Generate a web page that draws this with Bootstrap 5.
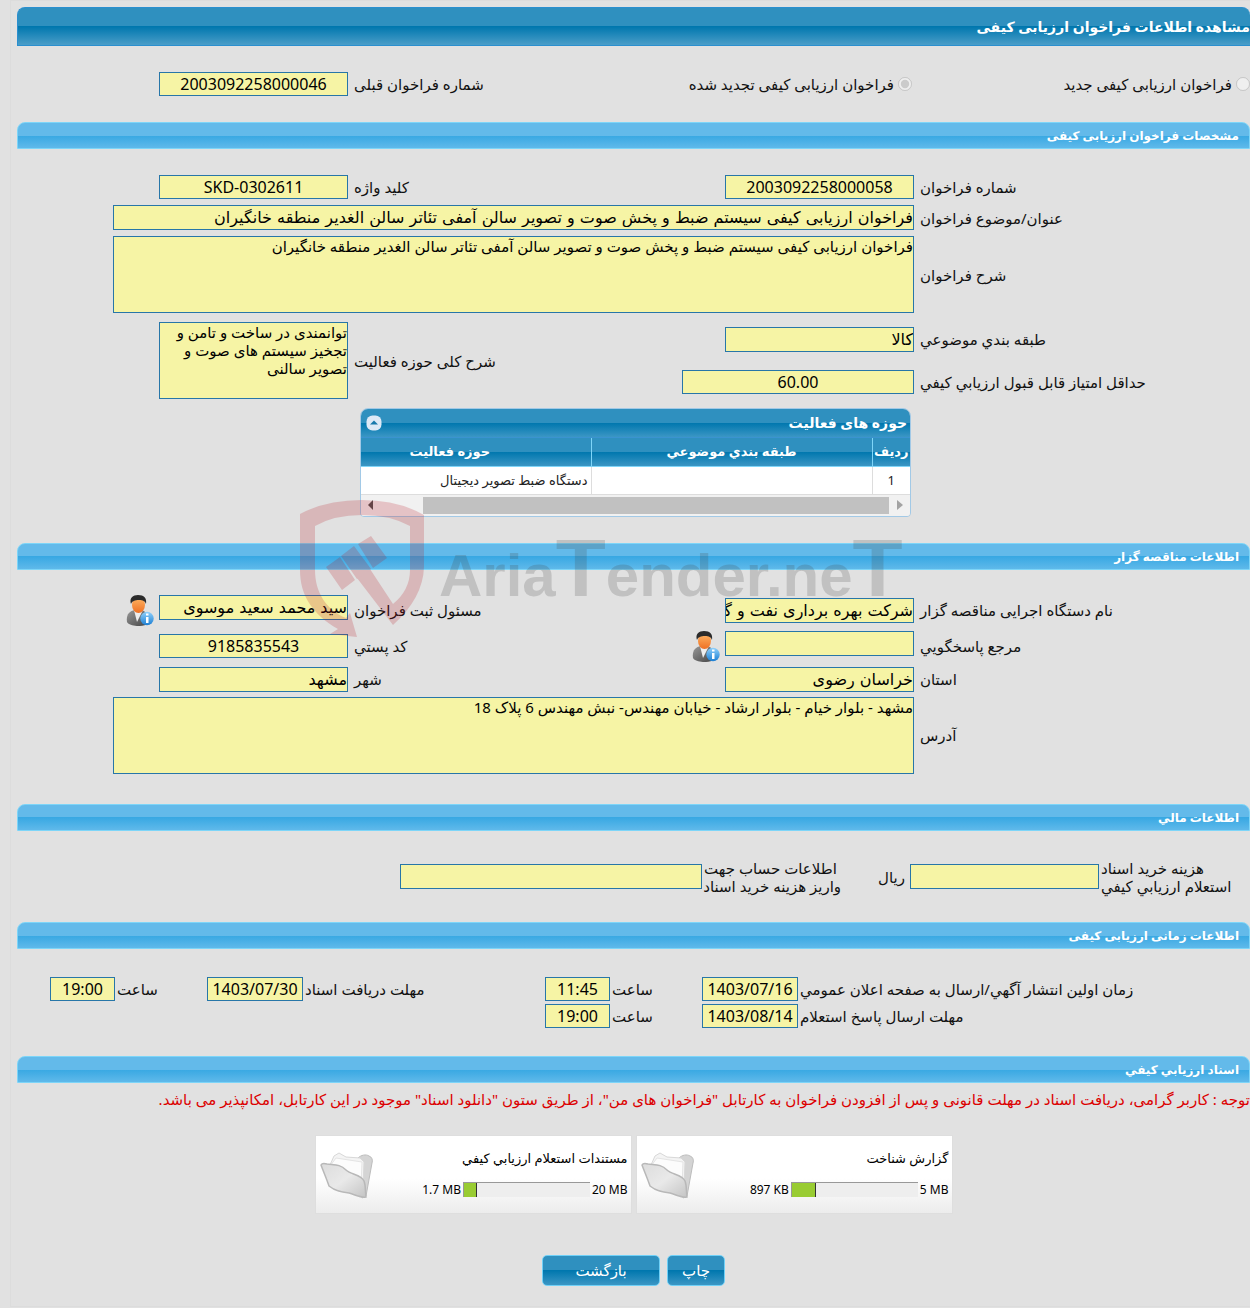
<!DOCTYPE html>
<html lang="fa" dir="rtl">
<head>
<meta charset="utf-8">
<meta name="viewport" content="width=device-width, initial-scale=1">
<title>مشاهده اطلاعات فراخوان ارزیابی کیفی</title>
<link href="https://cdn.jsdelivr.net/npm/bootstrap@5.3.0/dist/css/bootstrap.min.css" rel="stylesheet">
<style>
  body { background: #e1e1e1; color: #111; font-family: Tahoma, "Noto Sans", "DejaVu Sans", sans-serif; font-size: 15px; line-height: 18px; overflow-x: hidden; }
  .sheet { position: relative; margin-left: 10px; padding: 6px 0 20px 6px; border: 1px solid #dcdcdc; border-right: 0; }
  .title-bar { height: 39px; margin: 0; border: 1px solid #2a8fcf; border-right: 0; border-radius: 8px 8px 0 0; color: #fff; font-size: 14px; font-weight: 700; line-height: 37px; background: linear-gradient(#2f90bf 0 50%, #0077ae 50%, #4a9dc8); }
  .section-bar { height: 27px; margin: 0; padding-right: 10px; border: 1px solid #7dd5f8; border-radius: 8px 8px 0 0; color: #fff; font-size: 12px; font-weight: 700; line-height: 26px; background: linear-gradient(#63baea 0 50%, #38a8e3 50%, #5fb9ea); }
  .form-grid { display: grid; grid-template-columns: 330fr 406fr 148fr 331fr; column-gap: 6px; align-items: center; }
  .top-row { grid-template-columns: 332fr 410fr 142fr 331fr; padding: 26px 0; }
  .call-rows { padding-top: 26px; row-gap: 6px; }
  .class-rows { padding-top: 9px; }
  .owner-rows { padding: 25px 0 30px; row-gap: 5px; }
  .form-grid label { white-space: nowrap; }
  .form-grid > label, .label-stack { text-align: left; }
  .label-stack { gap: 25px; }
  .field-stack { gap: 18px; }
  .with-icon { gap: 5px; }
  .wide-cell { grid-column: 2 / 5; }
  .fld { display: block; height: 25px; width: 189px; padding: 0; border: 1px solid #2776a8; border-radius: 0; background: #f6f4a5; color: #000; font-family: "DejaVu Sans", sans-serif; font-size: 16px; line-height: 23px; }
  textarea.fld { height: 77px; font-family: Tahoma, "Noto Sans", "DejaVu Sans", sans-serif; font-size: 15px; line-height: 18px; resize: none; overflow: hidden; }
  .fld.num { height: 24px; font-family: Tahoma, "Noto Sans", sans-serif; text-align: center; direction: ltr; }
  .fld.w-long { width: 801px; max-width: 100%; }
  .fld.w-mid { width: 232px; }
  .fld.w-acc { width: 302px; }
  .fld.w-date { width: 96px; }
  .fld.w-time { width: 65px; }
  .radio { width: 14px; height: 14px; margin: 0; }
  .time-grid { display: grid; grid-template-columns: 450fr 96px 88fr 65px 238fr 96px 88fr 65px 31fr; gap: 3px 2px; align-items: center; padding: 28px 0; }
  .time-grid > label { text-align: left; white-space: nowrap; }
  .activity { width: 551px; margin: 9px auto 26px 343px; border: 1px solid #a2c9e6; border-radius: 8px 8px 4px 4px; overflow: hidden; }
  .glossy { background: linear-gradient(#2f90bf 0 50%, #0077ae 50%, #3b96c4); color: #fff; }
  .activity-head { height: 29px; padding: 0 3px 0 5px; border-bottom: 1px solid #3a93d0; font-size: 14px; font-weight: 700; }
  .activity-table { width: 602px; table-layout: fixed; margin: 0; font-size: 13px; }
  .activity-table th { height: 28px; padding: 0 0 2px; border-left: 1px solid #7fd5f8; border-bottom: 1px solid #7fd5f8; color: #fff; font-size: 13px; text-align: center; }
  .activity-table td { height: 28px; padding: 0 3px; border-left: 1px solid #ddd; border-bottom: 1px solid #ddd; background: #fff; color: #222; }
  .col-index { width: 38px; }
  .col-class { width: 281px; }
  .hscroll { height: 21px; padding: 2px 4px; background: #f1f1f1; }
  .hscroll button, .activity-head button { border: 0; padding: 0; background: none; line-height: 0; }
  .thumb { height: 17px; width: 466px; background: #c1c1c1; }
  .finance { gap: 2px; padding: 28px 12px 27px 0; }
  .finance label { width: 137px; text-align: left; white-space: nowrap; }
  .unit { margin: 0 3px 0 35px; }
  .warn { margin: 7px 0 27px; color: #dc0000; white-space: nowrap; }
  .doc-card { width: 317px; height: 79px; border: 1px solid #dedede; background: linear-gradient(#fff 55%, #ececec); color: #000; font-size: 13px; }
  .doc-info { gap: 14px; padding: 13px 3px; }
  .doc-size { gap: 2px; font-size: 12px; }
  .doc-icon { margin: 15px 0 0 4px; }
  .meter { width: 127px; height: 15px; background: #eee; border-top: 1px solid #999; border-left: 1px solid #999; }
  .meter-fill { background: #9c3; border-right: 1px solid #333; }
  .actions { gap: 7px; margin-top: 41px; }
  .act { height: 31px; width: 118px; border: 1px solid #6fd0f7; border-radius: 5px; font-size: 15px; }
  .act-sm { width: 58px; }
  .stamp { position: absolute; left: 289px; top: 499px; width: 610px; height: 140px; pointer-events: none; }
</style>
</head>
<body>
<svg width="0" height="0" class="position-absolute" aria-hidden="true">
  <defs>
    <linearGradient id="suit" x2="1" y2="1"><stop stop-color="#999"/><stop offset="1" stop-color="#444"/></linearGradient>
    <linearGradient id="skin" x2="0" y2="1"><stop stop-color="#ffb765"/><stop offset="1" stop-color="#ee7024"/></linearGradient>
    <linearGradient id="blu" x2="0" y2="1"><stop stop-color="#8fd0fb"/><stop offset="1" stop-color="#1d7fd3"/></linearGradient>
    <linearGradient id="fold" x2="1" y2="1"><stop stop-color="#dcdcdc"/><stop offset=".5" stop-color="#e9e9e9"/><stop offset="1" stop-color="#c4c4c4"/></linearGradient>
    <symbol id="person" viewBox="0 0 28 31">
      <path d="M1 27C0 20 3 16 9 15h5c7 1 8 5 8 14-5 3-18 3-21-2z" fill="url(#suit)"/>
      <path d="M8 15l3 12 6-12z" fill="#eee"/>
      <ellipse cx="12.500" cy="10" rx="6.500" ry="8" fill="url(#skin)"/>
      <path d="M5 9C3 3 7 0 12 0c6 0 9 3 8 9-1-3-3-4-7-4S6 6 5 9z" fill="#2b2b2b"/>
      <circle cx="21" cy="23.500" r="6.700" fill="url(#blu)"/>
      <path d="M20 22h2.500v6H20zM20 18.500h2.500v2H20z" fill="#fff"/>
    </symbol>
    <symbol id="folder" viewBox="0 0 54 50">
      <path d="M38 7c3-3 8-4 11-2 3 1 4 4 3 7l-6 33-4 2z" fill="#d4d4d4" stroke="#bdbdbd"/>
      <path d="M10 14l4-9 5-3 7 4 14 1 4 4-1 24z" fill="#f4f4f4" stroke="#d8d8d8"/>
      <path d="M10 15l6-8 26 4-1 25z" fill="#fcfcfc" stroke="#e4e4e4"/>
      <path d="M1 14c1-2 3-2 6-1 8 1 13 0 19 6 5 5 15 4 18 11 2 5 1 10 2 16-5 1-10-2-17-4-7-1-14-2-20-7C7 29 4 22 1 14z" fill="url(#fold)" stroke="#b8b8b8" stroke-width="1.500"/>
    </symbol>
  </defs>
</svg>
<main class="sheet">
  <h1 class="title-bar">مشاهده اطلاعات فراخوان ارزیابی کیفی</h1>

  <div class="form-grid top-row">
    <div class="d-flex align-items-center gap-1"><input class="radio" type="radio" name="kind" id="k1" disabled><label for="k1">فراخوان ارزیابی کیفی جدید</label></div>
    <div class="d-flex align-items-center gap-1"><input class="radio" type="radio" name="kind" id="k2" checked disabled><label for="k2">فراخوان ارزیابی کیفی تجدید شده</label></div>
    <label for="prev">شماره فراخوان قبلی</label>
    <input class="fld num" id="prev" value="2003092258000046" readonly>
  </div>

  <h2 class="section-bar">مشخصات فراخوان ارزیابی کیفی</h2>
  <div class="form-grid call-rows">
    <label for="no">شماره فراخوان</label><input class="fld num" id="no" value="2003092258000058" readonly>
    <label for="key">کلید واژه</label><input class="fld num" id="key" value="SKD-0302611" readonly>
    <label for="subj">عنوان/موضوع فراخوان</label>
    <div class="wide-cell"><input class="fld w-long" id="subj" value="فراخوان ارزیابی کیفی سیستم ضبط و پخش صوت و تصویر سالن آمفی تئاتر سالن الغدیر منطقه خانگیران" readonly></div>
    <label for="desc">شرح فراخوان</label>
    <div class="wide-cell"><textarea class="fld w-long" id="desc" readonly>فراخوان ارزیابی کیفی سیستم ضبط و پخش صوت و تصویر سالن آمفی تئاتر سالن الغدیر منطقه خانگیران</textarea></div>
  </div>
  <div class="form-grid class-rows">
    <div class="label-stack d-flex flex-column"><label for="cls">طبقه بندي موضوعي</label><label for="min">حداقل امتیاز قابل قبول ارزیابي کیفي</label></div>
    <div class="field-stack d-flex flex-column"><input class="fld" id="cls" value="کالا" readonly><input class="fld w-mid num" id="min" value="60.00" readonly></div>
    <label for="scope">شرح کلی حوزه فعالیت</label><textarea class="fld" id="scope" readonly>توانمندی در ساخت و تامن و تجخیز سیستم های صوت و تصویر سالنی</textarea>
  </div>

  <section class="activity">
    <div class="activity-head glossy d-flex justify-content-between align-items-center">
      <span>حوزه های فعالیت</span>
      <button type="button" aria-label="بستن"><svg width="16" height="16" viewBox="0 0 16 16"><rect x=".5" y=".5" width="15" height="15" rx="6" fill="#dde9f6"/><path d="M4 9.500l4-4 4 4z" fill="#1779ac"/></svg></button>
    </div>
    <table class="activity-table">
      <colgroup><col class="col-index"><col class="col-class"><col></colgroup>
      <thead><tr class="glossy"><th>ردیف</th><th>طبقه بندي موضوعي</th><th>حوزه فعالیت</th></tr></thead>
      <tbody><tr><td class="text-center">1</td><td></td><td>دستگاه ضبط تصویر دیجیتال</td></tr></tbody>
    </table>
    <div class="hscroll d-flex align-items-center">
      <button type="button" aria-label="راست"><svg width="17" height="10"><path d="M8 0l6 5-6 5z" fill="#a3a3a3"/></svg></button>
      <div class="thumb"></div>
      <button type="button" class="me-auto" aria-label="چپ"><svg width="10" height="10"><path d="M8 0L3 5l5 5z" fill="#505050"/></svg></button>
    </div>
  </section>

  <h2 class="section-bar">اطلاعات مناقصه گزار</h2>
  <div class="form-grid owner-rows">
    <label for="org">نام دستگاه اجرایی مناقصه گزار</label><input class="fld" id="org" value="شرکت بهره برداری نفت و گاز شرق" readonly>
    <label for="reg">مسئول ثبت فراخوان</label>
    <div class="with-icon d-flex"><input class="fld" id="reg" value="سید محمد سعید موسوی" readonly><svg width="28" height="31"><use href="#person"/></svg></div>
    <label for="ref">مرجع پاسخگویي</label>
    <div class="with-icon d-flex"><input class="fld" id="ref" readonly><svg width="28" height="31"><use href="#person"/></svg></div>
    <label for="zip">کد پستي</label><input class="fld num" id="zip" value="9185835543" readonly>
    <label for="prov">استان</label><input class="fld" id="prov" value="خراسان رضوی" readonly>
    <label for="city">شهر</label><input class="fld" id="city" value="مشهد" readonly>
    <label for="addr">آدرس</label>
    <div class="wide-cell"><textarea class="fld w-long" id="addr" readonly>مشهد - بلوار خیام - بلوار ارشاد - خیابان مهندس- نبش مهندس 6 پلاک 18</textarea></div>
  </div>

  <h2 class="section-bar">اطلاعات مالي</h2>
  <div class="finance d-flex align-items-center">
    <label for="cost">هزینه خرید اسناد<br>استعلام ارزیابي کیفي</label>
    <input class="fld" id="cost" readonly>
    <span class="unit">ریال</span>
    <label for="acc">اطلاعات حساب جهت<br>واریز هزینه خرید اسناد</label>
    <input class="fld w-acc" id="acc" readonly>
  </div>

  <h2 class="section-bar">اطلاعات زمانی ارزیابی کیفی</h2>
  <div class="time-grid">
    <label for="d1">زمان اولین انتشار آگهي/ارسال به صفحه اعلان عمومي</label><input class="fld w-date num" id="d1" value="1403/07/16" readonly>
    <label for="t1">ساعت</label><input class="fld w-time num" id="t1" value="11:45" readonly>
    <label for="d2">مهلت دریافت اسناد</label><input class="fld w-date num" id="d2" value="1403/07/30" readonly>
    <label for="t2">ساعت</label><input class="fld w-time num" id="t2" value="19:00" readonly><span></span>
    <label for="d3">مهلت ارسال پاسخ استعلام</label><input class="fld w-date num" id="d3" value="1403/08/14" readonly>
    <label for="t3">ساعت</label><input class="fld w-time num" id="t3" value="19:00" readonly>
  </div>

  <h2 class="section-bar">اسناد ارزیابي کیفي</h2>
  <p class="warn">توجه : کاربر گرامی، دریافت اسناد در مهلت قانونی و پس از افزودن فراخوان به کارتابل "فراخوان های من"، از طریق ستون "دانلود اسناد" موجود در این کارتابل، امکانپذیر می باشد.</p>

  <div class="d-flex justify-content-center gap-1">
    <article class="doc-card d-flex justify-content-between">
      <div class="doc-info d-flex flex-column">
        <span>گزارش شناخت</span>
        <div class="doc-size d-flex align-items-center"><span dir="ltr">5 MB</span><div class="meter d-flex justify-content-end"><div class="meter-fill" style="width:19%"></div></div><span dir="ltr">897 KB</span></div>
      </div>
      <svg class="doc-icon" width="54" height="50"><use href="#folder"/></svg>
    </article>
    <article class="doc-card d-flex justify-content-between">
      <div class="doc-info d-flex flex-column">
        <span>مستندات استعلام ارزیابي کیفي</span>
        <div class="doc-size d-flex align-items-center"><span dir="ltr">20 MB</span><div class="meter d-flex justify-content-end"><div class="meter-fill" style="width:10%"></div></div><span dir="ltr">1.7 MB</span></div>
      </div>
      <svg class="doc-icon" width="54" height="50"><use href="#folder"/></svg>
    </article>
  </div>

  <div class="actions d-flex justify-content-center">
    <button type="button" class="act act-sm glossy">چاپ</button>
    <button type="button" class="act glossy">بازگشت</button>
  </div>

  <svg class="stamp" viewBox="0 0 610 140" direction="ltr" opacity=".2">
    <g fill="#b7131f">
      <path fill-rule="evenodd" d="M0 14Q26 0 62 0T124 15V67Q123 98 93 125L57 78l13-9 23 35Q110 90 110 70V26Q90 15 62 15T15 26V70C15 92 26 110 46 118l4-5 7 24-27-3 8-5C12 114 0 95 0 70z"/>
      <path d="M26 67l14-10 15 23-13 10zM41 56l13-10 17 23-14 10zM58 44l13-8 16 22-14 10z"/>
    </g>
    <text x="139" y="96" fill="#444" font-family="'Liberation Sans',sans-serif" font-size="60" font-weight="700">Aria<tspan font-size="82">T</tspan>ender.ne<tspan font-size="82">T</tspan></text>
  </svg>
</main>
<script src="https://cdn.jsdelivr.net/npm/bootstrap@5.3.0/dist/js/bootstrap.bundle.min.js"></script>
</body>
</html>
